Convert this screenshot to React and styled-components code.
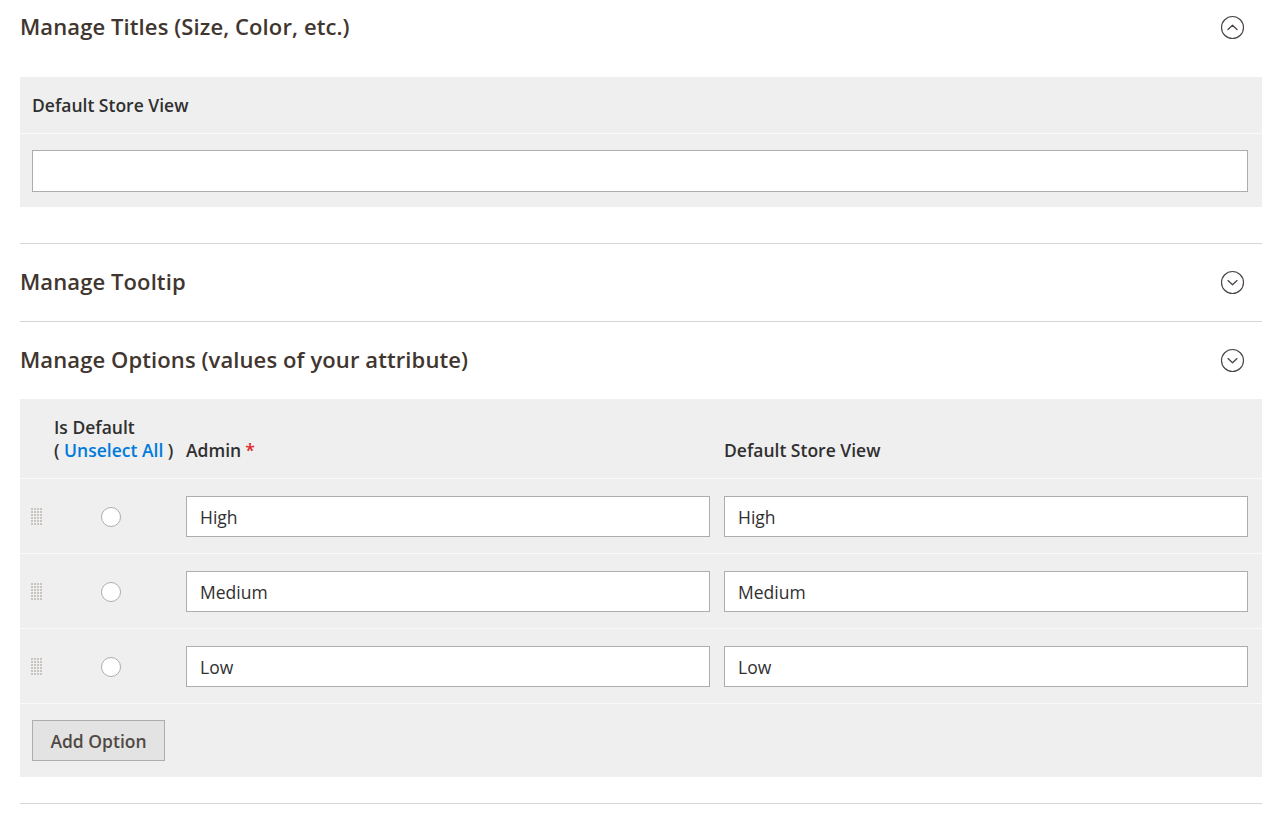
import React from "react";
import styled, { createGlobalStyle } from "styled-components";

const Global = createGlobalStyle`
  html, body { margin: 0; padding: 0; background: #fff; }
  body { font-family: "Open Sans", "Liberation Sans", sans-serif; color: #303030; }
  * { box-sizing: border-box; }
`;

const Page = styled.div`
  padding: 0 11px 0 20px;
`;

const Section = styled.section`
  border-top: ${(p) => (p.$first ? "none" : "1px solid #d6d6d6")};
  padding-bottom: ${(p) => p.$pb || 0}px;
`;

const Header = styled.div`
  height: ${(p) => p.$h}px;
  display: flex;
  align-items: center;
  justify-content: space-between;
  padding-right: 17px;
`;

const Title = styled.h2`
  margin: 0 0 3px;
  font-size: 22px;
  font-weight: 600;
  color: #41362f;
  letter-spacing: 0.1px;
`;

const Panel = styled.div`
  background: #efefef;
  margin-top: ${(p) => p.$mt || 0}px;
`;

const PanelHead = styled.div`
  height: 57px;
  display: flex;
  align-items: center;
  padding-left: 12px;
  font-size: 17.5px;
  font-weight: 600;
  color: #303030;
  border-bottom: 1px solid #fafafa;
`;

const PanelBody = styled.div`
  padding: 16px 14px 15px 12px;
`;

const Input = styled.input`
  display: block;
  width: 100%;
  height: ${(p) => p.$h || 41}px;
  border: 1px solid #adadad;
  background: #fff;
  padding: 0 13px;
  font-family: "Open Sans", "Liberation Sans", sans-serif;
  font-size: 17.5px;
  color: #303030;
  outline: none;
`;

const Grid = styled.div`
  display: grid;
  grid-template-columns: 152px 1fr 1fr;
  column-gap: 14px;
  padding-right: 14px;
  align-items: ${(p) => (p.$head ? "end" : "center")};
  ${(p) =>
    p.$head
      ? `padding-top: 16px; padding-bottom: 16px; height: 79px;`
      : `padding-top: 17px; padding-bottom: 16px; border-top: 1px solid #fafafa;`}
`;

const HeadLabel = styled.div`
  font-size: 17.5px;
  font-weight: 600;
  color: #303030;
  line-height: 23px;
  white-space: nowrap;
  padding-left: ${(p) => p.$pl || 0}px;
`;

const Link = styled.a`
  color: #007bdb;
  text-decoration: none;
  font-weight: 600;
`;

const Star = styled.span`
  color: #e22626;
  margin-left: 4px;
`;

const Lead = styled.div`
  display: flex;
  align-items: center;
  padding-left: 11px;
  gap: 39px;
`;

const Drag = styled.div`
  display: grid;
  grid-template-columns: repeat(4, 2px);
  grid-auto-rows: 2px;
  gap: 1px;
  width: 11px;
  span {
    background: #c8c4c0;
  }
`;

const Radio = styled.span`
  display: block;
  width: 20px;
  height: 20px;
  border-radius: 50%;
  border: 1px solid #adadad;
  background: #fff;
  margin-left: 20px;
`;

const Footer = styled.div`
  padding: 16px 12px 16px 12px;
  border-top: 1px solid #fafafa;
`;

const Button = styled.button`
  height: 41px;
  width: 133px;
  background: #e3e3e3;
  border: 1px solid #adadad;
  font-family: "Open Sans", "Liberation Sans", sans-serif;
  font-size: 17.5px;
  font-weight: 600;
  color: #514943;
  padding: 0;
`;

const Toggle = ({ up }) => (
  <svg width="25" height="25" viewBox="0 0 25 25" fill="none">
    <circle cx="12.5" cy="12.5" r="11" stroke="#4a4542" strokeWidth="1.15" />
    <path
      d={up ? "M8 14.5 L12.5 10.3 L17 14.5" : "M8 10.6 L12.5 14.8 L17 10.6"}
      stroke="#4a4542"
      strokeWidth="1.3"
      strokeLinecap="round"
      strokeLinejoin="round"
    />
  </svg>
);

const DragHandle = () => (
  <Drag>
    {Array.from({ length: 24 }).map((_, i) => (
      <span key={i} />
    ))}
  </Drag>
);

const options = [
  ["High", "High"],
  ["Medium", "Medium"],
  ["Low", "Low"],
];

export default function App() {
  return (
    <>
      <Global />
      <Page>
        <Section $first $pb={36}>
          <Header $h={54}>
            <Title>Manage Titles (Size, Color, etc.)</Title>
            <Toggle up />
          </Header>
          <Panel $mt={23}>
            <PanelHead>Default Store View</PanelHead>
            <PanelBody>
              <Input $h={42} defaultValue="" />
            </PanelBody>
          </Panel>
        </Section>

        <Section>
          <Header $h={77}>
            <Title>Manage Tooltip</Title>
            <Toggle />
          </Header>
        </Section>

        <Section $pb={26}>
          <Header $h={77}>
            <Title>Manage Options (values of your attribute)</Title>
            <Toggle />
          </Header>
          <Panel>
            <Grid $head>
              <HeadLabel $pl={34}>
                Is Default
                <br />( <Link href="#">Unselect All</Link> )
              </HeadLabel>
              <HeadLabel>
                Admin<Star>*</Star>
              </HeadLabel>
              <HeadLabel>Default Store View</HeadLabel>
            </Grid>
            {options.map(([a, b]) => (
              <Grid key={a}>
                <Lead>
                  <DragHandle />
                  <Radio />
                </Lead>
                <Input defaultValue={a} />
                <Input defaultValue={b} />
              </Grid>
            ))}
            <Footer>
              <Button>Add Option</Button>
            </Footer>
          </Panel>
        </Section>
        <Section />
      </Page>
    </>
  );
}
